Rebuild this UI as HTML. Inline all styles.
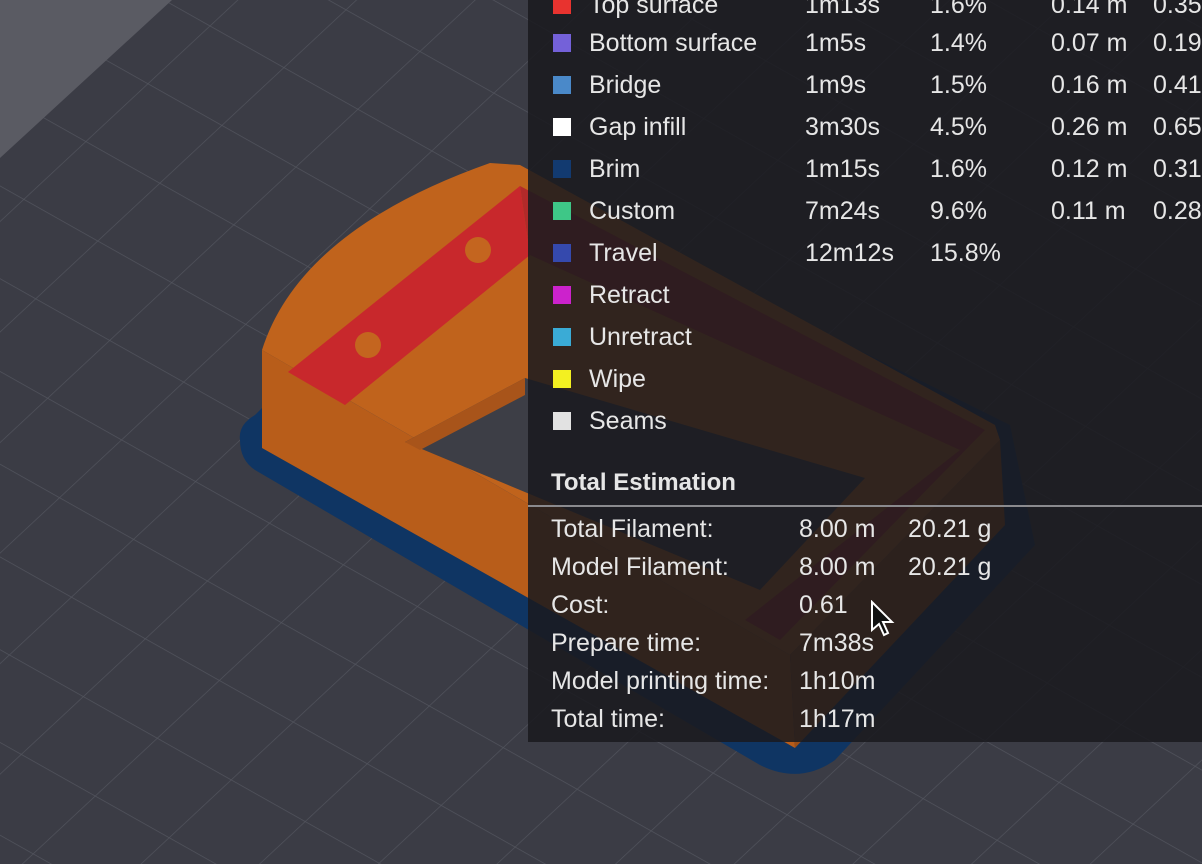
<!DOCTYPE html>
<html><head><meta charset="utf-8"><style>
html,body{margin:0;padding:0;width:1202px;height:864px;overflow:hidden;background:#3b3c45;font-family:"Liberation Sans",sans-serif;}
svg{position:absolute;left:0;top:0}
#panel{position:absolute;left:528px;top:0;width:674px;height:742px;background:rgba(26,26,30,0.86);color:#e6e6e6;font-size:25px;}
.r{position:absolute;left:0;height:30px;line-height:30px;white-space:nowrap}
.r span{position:absolute;top:0}
.sw{position:absolute;left:25px;top:6px;width:18px;height:18px}
.line{position:absolute;left:0;top:505px;width:674px;height:2px;background:#8a8a8e}
</style></head><body>
<svg width="1202" height="864" viewBox="0 0 1202 864">
<defs>
<pattern id="g" width="85" height="85" patternUnits="userSpaceOnUse" patternTransform="matrix(0.87 0.49 -0.73 0.68 0 0)">
<path d="M0 0H85M0 0V85" stroke="#52545d" stroke-width="1.4" fill="none"/>
</pattern>
</defs>
<rect width="1202" height="864" fill="#3b3c45"/>
<rect width="1202" height="864" fill="url(#g)"/>
<polygon points="0,0 172,0 0,158" fill="#5a5b63"/>
<path d="M240,440 Q238,425 255,415 L500,172 L1010,425 L1035,545 L835,760 Q800,785 760,765 L255,470 Q240,460 240,440Z" fill="#0f3563"/>
<path d="M262,350 Q300,230 490,163 L520,165 L995,425 L1000,440 L790,655 L262,350Z" fill="#c0631c"/>
<polygon points="262,350 790,655 795,748 262,448" fill="#b85d1a"/>
<polygon points="790,655 1000,440 1005,525 795,748" fill="#9c4e16"/>
<polygon points="405,442 525,378 865,478 760,590" fill="#3d3e46"/>
<polygon points="405,442 525,378 525,395 420,450" fill="#a8541a"/>
<polygon points="288,372 520,186 530,255 345,405" fill="#c8282c"/>
<polygon points="530,255 520,186 985,430 960,450" fill="#b22a2a"/>
<polygon points="960,450 985,430 780,640 745,620" fill="#b22a2a"/>
<circle cx="478" cy="250" r="13" fill="#c4651f"/>
<circle cx="368" cy="345" r="13" fill="#c4651f"/>
</svg>
<div id="panel">
<div class="r" style="top:-10px"><div class="sw" style="background:#e8332f"></div><span style="left:61px">Top surface</span><span style="left:277px">1m13s</span><span style="left:402px">1.6%</span><span style="left:523px">0.14 m</span><span style="left:625px">0.35 g</span></div>
<div class="r" style="top:28px"><div class="sw" style="background:#7461d9"></div><span style="left:61px">Bottom surface</span><span style="left:277px">1m5s</span><span style="left:402px">1.4%</span><span style="left:523px">0.07 m</span><span style="left:625px">0.19 g</span></div>
<div class="r" style="top:70px"><div class="sw" style="background:#4a89c9"></div><span style="left:61px">Bridge</span><span style="left:277px">1m9s</span><span style="left:402px">1.5%</span><span style="left:523px">0.16 m</span><span style="left:625px">0.41 g</span></div>
<div class="r" style="top:112px"><div class="sw" style="background:#ffffff"></div><span style="left:61px">Gap infill</span><span style="left:277px">3m30s</span><span style="left:402px">4.5%</span><span style="left:523px">0.26 m</span><span style="left:625px">0.65 g</span></div>
<div class="r" style="top:154px"><div class="sw" style="background:#123a70"></div><span style="left:61px">Brim</span><span style="left:277px">1m15s</span><span style="left:402px">1.6%</span><span style="left:523px">0.12 m</span><span style="left:625px">0.31 g</span></div>
<div class="r" style="top:196px"><div class="sw" style="background:#3ec787"></div><span style="left:61px">Custom</span><span style="left:277px">7m24s</span><span style="left:402px">9.6%</span><span style="left:523px">0.11 m</span><span style="left:625px">0.28 g</span></div>
<div class="r" style="top:238px"><div class="sw" style="background:#3549ad"></div><span style="left:61px">Travel</span><span style="left:277px">12m12s</span><span style="left:402px">15.8%</span></div>
<div class="r" style="top:280px"><div class="sw" style="background:#cc22cc"></div><span style="left:61px">Retract</span></div>
<div class="r" style="top:322px"><div class="sw" style="background:#3aabd6"></div><span style="left:61px">Unretract</span></div>
<div class="r" style="top:364px"><div class="sw" style="background:#f3f021"></div><span style="left:61px">Wipe</span></div>
<div class="r" style="top:406px"><div class="sw" style="background:#e2e2e2"></div><span style="left:61px">Seams</span></div>
<div class="r" style="top:468px;font-weight:bold;font-size:24px"><span style="left:23px">Total Estimation</span></div>
<div class="line"></div>
<div class="r" style="top:514px"><span style="left:23px">Total Filament:</span><span style="left:271px">8.00 m</span><span style="left:380px">20.21 g</span></div>
<div class="r" style="top:552px"><span style="left:23px">Model Filament:</span><span style="left:271px">8.00 m</span><span style="left:380px">20.21 g</span></div>
<div class="r" style="top:590px"><span style="left:23px">Cost:</span><span style="left:271px">0.61</span></div>
<div class="r" style="top:628px"><span style="left:23px">Prepare time:</span><span style="left:271px">7m38s</span></div>
<div class="r" style="top:666px"><span style="left:23px">Model printing time:</span><span style="left:271px">1h10m</span></div>
<div class="r" style="top:704px"><span style="left:23px">Total time:</span><span style="left:271px">1h17m</span></div>
<svg style="left:342px;top:600px" width="26" height="38" viewBox="0 0 26 38"><path d="M2 2 L2 30 L9 24 L14 35 L18 33 L13 22 L22 22 Z" fill="#111" stroke="#fff" stroke-width="2"/></svg>
</div>
</body></html>
